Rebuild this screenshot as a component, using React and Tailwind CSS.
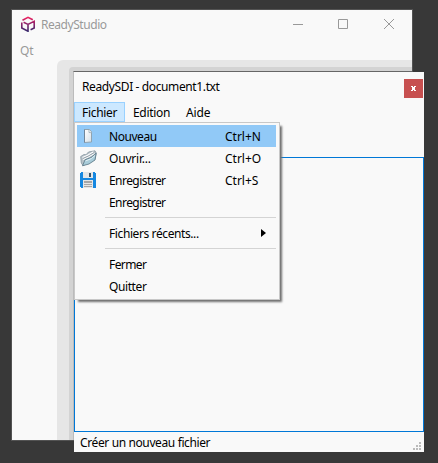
import React from "react";

function Cube() {
  return (
    <svg className="-mt-[1px]" width="16" height="16" viewBox="0 0 16 16" fill="none" strokeWidth="1.6">
      <defs>
        <linearGradient id="cube" x1="0" y1="0" x2="0" y2="16" gradientUnits="userSpaceOnUse">
          <stop offset="0.1" stopColor="#ea1f5f" />
          <stop offset="0.5" stopColor="#8b246c" />
          <stop offset="1" stopColor="#30286c" />
        </linearGradient>
      </defs>
      <path stroke="url(#cube)" d="M2.500 4.200 8 1.300 12.800 3.800M1.800 6.600V12L8 15.200V8.400L3.600 6.200M8 8.400 14.200 5.200V12L10.600 13.800" />
    </svg>
  );
}

function FileIcon() {
  return (
    <svg width="16" height="16" viewBox="0 0 16 16">
      <defs>
        <linearGradient id="file" x1="0" y1="0" x2="1" y2="1">
          <stop offset="0" stopColor="#fff" />
          <stop offset="1" stopColor="#d6e0e7" />
        </linearGradient>
      </defs>
      <path d="M4.500 1.500H9.500L11.500 4v10L4.500 14.500Z" fill="url(#file)" stroke="#8fa3b0" />
      <path d="M4.500 1.500V14.500" stroke="#70869a" />
      <path d="M9 1.500v3l2.500.2" fill="#f4f7f9" stroke="#91a3ae" strokeWidth=".7" />
    </svg>
  );
}

function FolderIcon() {
  return (
    <svg width="17" height="17" viewBox="0 0 17 17">
      <path d="M.7 6.500 4 4.500 6 4.800 8.500 2 15 .8 16.200 3 15 9.500 3 15.500 1.300 13Z" fill="#b9c3c9" stroke="#8796a0" strokeWidth=".8" />
      <path d="M2.500 7.500 8 5 13.500 1.800M3 9.500 9 6.500 14.500 3.500" stroke="#fff" strokeWidth="1.100" fill="none" />
      <path d="M3 8.500 8.500 6 14 2.700" stroke="#70828d" strokeWidth=".6" fill="none" />
      <path d="M2.500 15.800 5 9.800 11 7.500 16.200 3.200 15 10 9 14Z" fill="#a9ccd9" stroke="#587584" strokeWidth=".8" />
      <path d="M5.500 11 11.500 8.500 15 5.500" stroke="#e1f0f5" fill="none" />
    </svg>
  );
}

function DiskIcon() {
  return (
    <svg width="16" height="16" viewBox="0 0 16 16" shapeRendering="crispEdges">
      <path d="M1 0h13l2 2v13l-1 1H1l-1-1V1Z" fill="#1587e0" />
      <path d="M3 0h10v6H3Z" fill="#e3e6e8" />
      <path d="M9 1h2v4H9Z" fill="#36536b" />
      <path d="M3 8h10v8H3Z" fill="#e6e6e6" />
      <path d="M4 9h8v2H4zM4 12h8v1H4zM4 14h8v1H4z" fill="#a6a6a6" />
    </svg>
  );
}

function Item({ icon, label, shortcut, active, arrow, tracking = "tracking-[-0.45px]" }) {
  return (
    <div className={`flex h-[22px] items-center ${active ? "bg-[#91c9f7]" : ""}`}>
      <div className="flex w-[32px] pl-[3px]">{icon}</div>
      <span className={`w-[116px] pt-[2px] ${tracking}`}>{label}</span>
      {shortcut && <span className="pt-[2px]">{shortcut}</span>}
      {arrow && (
        <svg className="ml-[36px] -mt-px" width="5" height="8" viewBox="0 0 5 8">
          <path d="M0 0 5 4 0 8Z" fill="#000" />
        </svg>
      )}
    </div>
  );
}

function Separator() {
  return (
    <div className="flex h-[9px] items-center pl-[28px]">
      <div className="h-px w-full bg-[#d4d4d4]" />
    </div>
  );
}

function Menu() {
  return (
    <div className="absolute left-0 top-[50px] h-[178px] w-[206px] border border-[#c8c8c8] bg-[#f9f9f9] py-[2px] pl-[2px] pr-[3px] shadow-[3px_3px_2px_-1px_#707070]">
      <Item icon={<FileIcon />} label="Nouveau" shortcut="Ctrl+N" active />
      <Item icon={<FolderIcon />} label="Ouvrir..." shortcut="Ctrl+O" tracking="tracking-[-0.2px]" />
      <Item icon={<DiskIcon />} label="Enregistrer" shortcut="Ctrl+S" tracking="tracking-[-0.55px]" />
      <Item label="Enregistrer" tracking="tracking-[-0.55px]" />
      <Separator />
      <Item label="Fichiers récents..." arrow tracking="tracking-[-0.4px]" />
      <Separator />
      <Item label="Fermer" tracking="tracking-[-0.6px]" />
      <Item label="Quitter" tracking="tracking-[-0.4px]" />
    </div>
  );
}

function Dialog() {
  return (
    <div className="absolute left-[74px] top-[72px] flex h-[380px] w-[350px] flex-col bg-[#f9f9f9] text-black">
      <div className="flex h-[30px] justify-between pl-[8px] pr-px">
        <span className="leading-[30px] tracking-[-0.38px]">ReadySDI - document1.txt</span>
        <div className="mt-[7px] flex h-[19px] w-[19px] items-center justify-center bg-[#c75050]">
          <svg width="5" height="5" viewBox="0 0 5 5" shapeRendering="crispEdges" fill="#fff">
            <path d="M0 0h2v1H0zM3 0h2v1H3zM1 1h3v3H1zM0 4h2v1H0zM3 4h2v1H3z" />
          </svg>
        </div>
      </div>
      <div className="flex h-[55px] items-start">
        <div className="h-[20px] w-[51px] border border-[#99d1ff] bg-[#cce8ff] pl-[7px] leading-[20px] tracking-[-0.3px]">Fichier</div>
        <span className="ml-[8px] w-[53px] leading-[22px] tracking-[-0.3px]">Edition</span>
        <span className="leading-[22px] tracking-[-0.15px]">Aide</span>
      </div>
      <div className="h-[275px] border border-[#0078d7]" />
      <div className="flex h-[20px] items-center justify-between pl-[6px] pr-[3px]">
        <span className="pt-[2px] tracking-[-0.38px]">Créer un nouveau fichier</span>
        <svg className="mt-[8px]" width="8" height="8" viewBox="0 0 8 8" shapeRendering="crispEdges" fill="#bbb">
          <path d="M6 0h2v2H6zM3 3h2v2H3zM6 3h2v2H6zM0 6h2v2H0zM3 6h2v2H3zM6 6h2v2H6z" />
        </svg>
      </div>
      <Menu />
    </div>
  );
}

export default function App() {
  return (
    <div className="relative h-[463px] w-[438px] overflow-hidden bg-[#383838] font-['Noto_Sans',sans-serif] text-[12px] leading-[16px]">
      <div className="absolute left-[11px] top-[9px] flex h-[432px] w-[402px] flex-col overflow-hidden border border-[#535353] bg-[#f9f9f9] text-[#999]">
        <div className="flex h-[50px] justify-between">
          <div className="pl-[8px]">
            <div className="flex h-[28px] items-center gap-[5px]">
              <Cube />
              <span className="pt-[2px] tracking-[-0.45px]">ReadyStudio</span>
            </div>
            <div className="mt-[5px]">Qt</div>
          </div>
          <svg width="134" height="28" viewBox="0 0 134 28" fill="none" stroke="#999">
            <path d="M15 14.500h10M60.500 9.500h9v9h-9zM106 9l10 10M116 9l-10 10" />
          </svg>
        </div>
        <div className="ml-[45px] flex-1 rounded-tl-[6px] bg-[#e6e6e6] pl-[12px] pt-[7px]">
          <div className="h-full rounded-tl-[4px] bg-[#d3d3d3] pl-[4px] pt-[4px]">
            <div className="h-full border-l border-t border-l-[#bbb] border-t-[#666]" />
          </div>
        </div>
      </div>
      <Dialog />
    </div>
  );
}
